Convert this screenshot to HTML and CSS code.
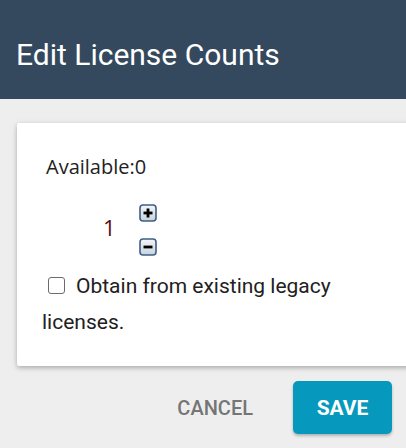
FILE: index.html
```html
<!DOCTYPE html>
<html>
<head>
<meta charset="utf-8">
<link rel="stylesheet" href="styles.css">
</head>
<body>
<div class="page">
  <header class="topbar">
    <h1 class="title">Edit License Counts</h1>
  </header>
  <main class="content">
    <section class="card">
      <div class="available">Available:0</div>
      <div class="counter">
        <span class="count">1</span>
        <div class="steppers">
          <button class="step" aria-label="increase">
            <svg width="18" height="18" viewBox="0 0 18 18">
              <defs>
                <linearGradient id="g1" x1="0" y1="0" x2="0" y2="1">
                  <stop offset="0" stop-color="#f4f6f9"/>
                  <stop offset="1" stop-color="#c9d2dd"/>
                </linearGradient>
              </defs>
              <rect x="1" y="1" width="16" height="16" rx="3" fill="url(#g1)" stroke="#3e5f86" stroke-width="1.6"/>
              <rect x="4.5" y="7.6" width="9" height="2.8" fill="#000"/>
              <rect x="7.6" y="4.5" width="2.8" height="9" fill="#000"/>
            </svg>
          </button>
          <button class="step" aria-label="decrease">
            <svg width="18" height="18" viewBox="0 0 18 18">
              <rect x="1" y="1" width="16" height="16" rx="3" fill="url(#g1)" stroke="#3e5f86" stroke-width="1.6"/>
              <rect x="4.5" y="7.6" width="9" height="2.8" fill="#000"/>
            </svg>
          </button>
        </div>
      </div>
      <label class="legacy">
        <span class="box"></span><span class="legacy-text">Obtain from existing legacy licenses.</span>
      </label>
    </section>
    <div class="actions">
      <button class="btn-cancel">CANCEL</button>
      <button class="btn-save">SAVE</button>
    </div>
  </main>
</div>
</body>
</html>
```

FILE: styles.css
```css
html, body {
  margin: 0;
  padding: 0;
  background: #eeeeee;
  overflow: hidden;
}
.page {
  width: 406px;
  height: 448px;
  overflow: hidden;
  font-family: Roboto, "Liberation Sans", sans-serif;
}
.topbar {
  height: 99px;
  background: #34495e;
  display: flex;
  align-items: center;
  padding-left: 16px;
}
.title {
  margin: 0;
  color: #ffffff;
  font-family: Roboto, sans-serif;
  font-weight: 400;
  font-size: 30px;
  padding-top: 9px;
}
.content {
  padding: 24px 0 0 17px;
}
.card {
  width: 420px;
  height: 243px;
  box-sizing: border-box;
  background: #ffffff;
  border-radius: 2px;
  box-shadow: 0 2px 4px rgba(0,0,0,0.22), 0 1px 8px rgba(0,0,0,0.08);
  padding: 31px 0 0 29px;
}
.available {
  font-family: "Open Sans", sans-serif;
  font-size: 20px;
  color: #222222;
  line-height: 26px;
}
.counter {
  display: flex;
  align-items: center;
  margin-top: 24px;
  padding-left: 57px;
}
.count {
  font-family: "Open Sans", sans-serif;
  font-size: 22px;
  color: #5a0e0e;
  width: 36px;
  position: relative;
  top: -3px;
}
.steppers {
  display: flex;
  flex-direction: column;
  gap: 16px;
}
.step {
  border: 0;
  padding: 0;
  background: none;
  width: 18px;
  height: 18px;
  display: block;
}
.step svg {
  display: block;
}
.legacy {
  display: block;
  margin-top: 12px;
  font-size: 21px;
  line-height: 36px;
  color: #212121;
  width: 330px;
  margin-left: -4px;
}
.box {
  display: inline-block;
  width: 15px;
  height: 15px;
  border: 1.5px solid #6b6b6b;
  border-radius: 3px;
  vertical-align: -1px;
  margin-left: 6px;
  margin-right: 11px;
}
.actions {
  display: flex;
  justify-content: flex-end;
  align-items: center;
  padding: 15px 14px 0 0;
  gap: 20px;
}
.btn-cancel {
  border: 0;
  background: none;
  font-family: Roboto, sans-serif;
  font-weight: 500;
  font-size: 20px;
  color: #757575;
  padding: 0 20px 0 0;
}
.btn-save {
  border: 0;
  width: 99px;
  height: 53px;
  border-radius: 5px;
  background: #0799bd;
  color: #ffffff;
  font-family: Roboto, sans-serif;
  font-weight: 700;
  font-size: 21px;
  box-shadow: 0 2px 3px rgba(0,0,0,0.25);
}
```
